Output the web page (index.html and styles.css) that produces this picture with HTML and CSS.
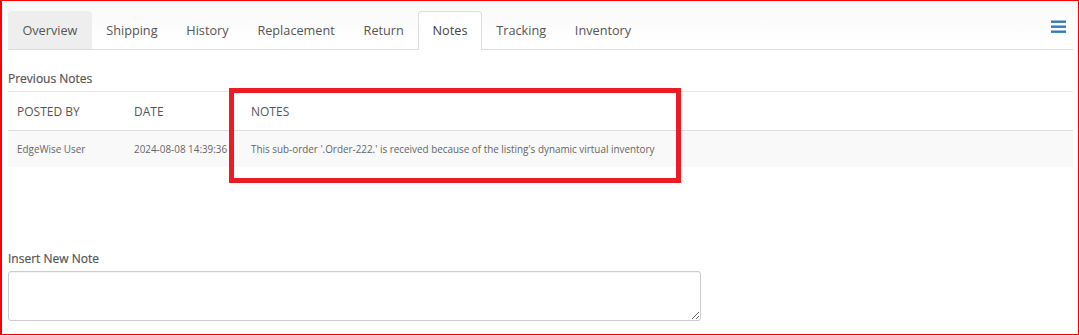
FILE: index.html
```html
<!DOCTYPE html>
<html lang="en">
<head>
  <meta charset="UTF-8">
  <title>Order Notes</title>
  <link rel="stylesheet" href="styles.css">
</head>
<body>

<div class="frame">
  <!-- tabs -->
  <div class="tabs">
    <a class="tab tab-grey">Overview</a>
    <a class="tab">Shipping</a>
    <a class="tab">History</a>
    <a class="tab">Replacement</a>
    <a class="tab">Return</a>
    <a class="tab tab-active">Notes</a>
    <a class="tab">Tracking</a>
    <a class="tab">Inventory</a>
    <span class="menu">
      <svg width="15" height="13" viewBox="0 0 15 13">
        <rect x="0" y="0.5" width="15" height="2.4" fill="#337ab7"/>
        <rect x="0" y="5.5" width="15" height="2.4" fill="#337ab7"/>
        <rect x="0" y="10.5" width="15" height="2.4" fill="#337ab7"/>
      </svg>
    </span>
  </div>

  <div class="section-title">Previous Notes</div>

  <div class="notes-wrap">
    <table class="notes">
      <thead>
        <tr>
          <th class="col-by">POSTED BY</th>
          <th class="col-date">DATE</th>
          <th>NOTES</th>
        </tr>
      </thead>
      <tbody>
        <tr>
          <td>EdgeWise User</td>
          <td>2024-08-08 14:39:36</td>
          <td>This sub-order '.Order-222.' is received because of the listing's dynamic virtual inventory</td>
        </tr>
      </tbody>
    </table>
    <div class="highlight"></div>
  </div>

  <div class="section-title new-note">Insert New Note</div>
  <textarea class="note-input"></textarea>
</div>

</body>
</html>
```

FILE: styles.css
```css
body {
  margin: 0;
  font-family: "Open Sans", "Noto Sans", sans-serif;
  background: #fff;
}
.frame {
  box-sizing: border-box;
  width: 1079px;
  height: 335px;
  border: 1px solid #ff0000;
  border-left-width: 2px;
  padding: 10px 5px 0 6px;
  background: linear-gradient(#f9f9f9, #ffffff 45px);
}
.tabs {
  display: flex;
  align-items: flex-end;
  height: 38px;
  border-bottom: 1px solid #dddddd;
}
.tab {
  box-sizing: border-box;
  height: 38px;
  line-height: 36px;
  padding: 0 13.4px;
  font-size: 12.7px;
  color: #555;
  border: 1px solid transparent;
  border-bottom: none;
  border-radius: 4px 4px 0 0;
}
.tab-grey {
  background: #eeeeee;
}
.tab-active {
  background: #fff;
  border-color: #dddddd;
  color: #444;
  height: 39px;
  margin-bottom: -1px;
}
.menu {
  margin-left: auto;
  margin-right: 7px;
  align-self: flex-start;
  margin-top: 9px;
  display: flex;
}
.section-title {
  margin-top: 20px;
  font-size: 12px;
  line-height: 17px;
  color: #555;
  -webkit-text-stroke: 0.2px #555;
}
.notes-wrap {
  position: relative;
  margin-top: 4px;
}
.notes {
  width: 100%;
  border-collapse: collapse;
}
.notes th {
  text-align: left;
  font-weight: normal;
  font-size: 12px;
  color: #555;
  height: 38px;
  padding: 0 9px;
  border-top: 1px solid #e6e6e6;
  border-bottom: 1px solid #dddddd;
}
.notes td {
  font-size: 9.9px;
  color: #666;
  height: 36px;
  padding: 0 9px;
  background: #f9f9f9;
}
.col-by, .col-date {
  width: 99px;
}
.highlight {
  position: absolute;
  left: 221px;
  top: -3px;
  width: 442px;
  height: 85px;
  border: 5px solid #ed1c24;
}
.new-note {
  margin-top: 83px;
}
.note-input {
  display: block;
  box-sizing: border-box;
  width: 693px;
  height: 50px;
  margin-top: 4px;
  border: 1px solid #cccccc;
  border-radius: 3px;
  box-shadow: inset 0 1px 1px rgba(0, 0, 0, 0.05);
}
```
